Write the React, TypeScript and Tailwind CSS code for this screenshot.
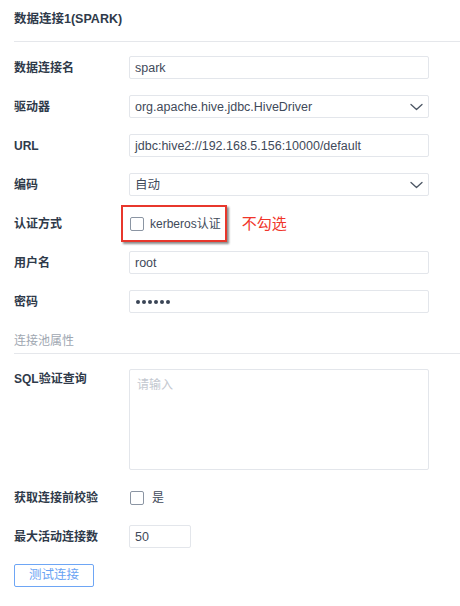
import React from "react";

const font = { fontFamily: '"Liberation Sans", "Noto Sans CJK SC", sans-serif' };

function Chevron() {
  return (
    <svg width="13" height="8" viewBox="0 0 13 8" fill="none">
      <path d="M1 1.5 L6.5 6.5 L12 1.5" stroke="#4b5563" strokeWidth="1.3" strokeLinecap="round" strokeLinejoin="round" />
    </svg>
  );
}

function Row({ label, children, bold }: { label: string; children: React.ReactNode; bold?: boolean }) {
  return (
    <div className="flex h-[39px] items-center">
      <div className={`w-[115px] shrink-0 text-[12px] leading-[18px] text-[#2f3a4a] ${bold ? "font-bold" : "font-semibold"}`}>{label}</div>
      {children}
    </div>
  );
}

function Input({ value, select, className, dots }: { value: string; select?: boolean; className?: string; dots?: boolean }) {
  return (
    <div
      className={`flex h-[23px] items-center justify-between rounded-[2px] border border-[#e3e6eb] bg-white pl-[5px] pr-[5px] text-[12.5px] text-[#3f4a5a] ${className ?? "w-[300px]"}`}
    >
      {dots ? (
        <span className="flex gap-[2px] pl-[1px]">
          {[0, 1, 2, 3, 4, 5].map((i) => (
            <span key={i} className="inline-block h-[4px] w-[4px] rounded-full bg-[#3a4556]" />
          ))}
        </span>
      ) : (
        <span className="leading-[18px]">{value}</span>
      )}
      {select && <Chevron />}
    </div>
  );
}

function Checkbox() {
  return <span className="inline-block h-[14px] w-[14px] rounded-[2px] border border-[#8b95a3] bg-white" />;
}

export default function App() {
  return (
    <div className="min-h-[606px] w-[460px] bg-white pl-[14px]" style={font}>
      <div className="flex h-[42px] items-center border-b border-[#e5e7eb] pb-[2px]">
        <span className="text-[12.5px] font-bold text-[#2f3a4a]">数据连接1(SPARK)</span>
      </div>
      <div className="mt-[6px]">
        <Row label="数据连接名">
          <Input value="spark" />
        </Row>
        <Row label="驱动器">
          <Input value="org.apache.hive.jdbc.HiveDriver" select />
        </Row>
        <Row label="URL" bold>
          <Input value="jdbc:hive2://192.168.5.156:10000/default" />
        </Row>
        <Row label="编码">
          <Input value="自动" select />
        </Row>
        <Row label="认证方式">
          <div className="relative flex items-center">
            <div className="flex items-center gap-[6px] pl-[1px]">
              <Checkbox />
              <span className="text-[12px] leading-[18px] text-[#3f4a5a]">kerberos认证</span>
            </div>
            <div className="absolute left-[-8px] top-[-10px] h-[37px] w-[106px] border-2 border-[#e8372c] shadow-[2px_2px_2px_rgba(0,0,0,0.45)]" />
            <span className="ml-[21px] text-[15px] leading-[18px] text-[#f0352a]">不勾选</span>
          </div>
        </Row>
        <Row label="用户名">
          <Input value="root" />
        </Row>
        <Row label="密码">
          <Input value="" dots />
        </Row>
      </div>
      <div className="flex h-[33px] items-end border-b border-[#e5e7eb] pb-[3px]">
        <span className="text-[12px] leading-[18px] text-[#a0a7b1]">连接池属性</span>
      </div>
      <div className="mt-[15px] flex items-start">
        <div className="w-[115px] shrink-0 pt-[1px] text-[12px] font-semibold leading-[18px] text-[#2f3a4a]">SQL验证查询</div>
        <div className="h-[101px] w-[300px] rounded-[2px] border border-[#e3e6eb] bg-white pl-[7px] pt-[6px] text-[12px] leading-[18px] text-[#c3c8d0]">
          请输入
        </div>
      </div>
      <div className="mt-[8px]">
        <Row label="获取连接前校验">
          <div className="flex items-center gap-[8px] pl-[1px]">
            <Checkbox />
            <span className="text-[12px] text-[#3f4a5a]">是</span>
          </div>
        </Row>
        <Row label="最大活动连接数">
          <Input value="50" className="w-[62px]" />
        </Row>
      </div>
      <div className="mt-[8px]">
        <button className="flex h-[23px] w-[80px] items-center justify-center rounded-[2px] border border-[#6ea6f5] bg-white text-[12.5px] text-[#6aa3f3]">
          测试连接
        </button>
      </div>
    </div>
  );
}
